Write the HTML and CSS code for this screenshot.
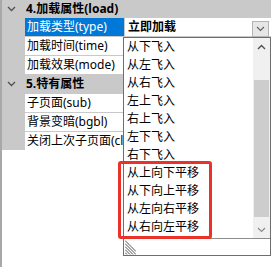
FILE: index.html
```html
<!DOCTYPE html>
<html lang="zh">
<head>
  <meta charset="utf-8">
  <link rel="stylesheet" href="styles.css">
</head>
<body>
<div class="page">

  <div class="grid">
    <div class="cat">
      <span class="toggle"><svg width="9" height="6" viewBox="0 0 9 6"><polyline points="1,1 4.5,4.5 8,1" fill="none" stroke="#505050" stroke-width="1.3"/></svg></span>
      <span>4.加载属性(load)</span>
    </div>
    <div class="row">
      <div class="name sel">加载类型(type)</div>
      <div class="val combo">
        <span class="combo-text">立即加载</span>
        <span class="drop-btn"><svg width="9" height="6" viewBox="0 0 9 6"><polyline points="1,1 4.5,4.5 8,1" fill="none" stroke="#606060" stroke-width="1.1"/></svg></span>
      </div>
    </div>
    <div class="row">
      <div class="name">加载时间(time)</div>
      <div class="val"></div>
    </div>
    <div class="row">
      <div class="name">加载效果(mode)</div>
      <div class="val"></div>
    </div>
    <div class="cat">
      <span class="toggle"><svg width="9" height="6" viewBox="0 0 9 6"><polyline points="1,1 4.5,4.5 8,1" fill="none" stroke="#505050" stroke-width="1.3"/></svg></span>
      <span>5.特有属性</span>
    </div>
    <div class="row">
      <div class="name">子页面(sub)</div>
      <div class="val"></div>
    </div>
    <div class="row">
      <div class="name">背景变暗(bgbl)</div>
      <div class="val"></div>
    </div>
    <div class="row">
      <div class="name">关闭上次子页面(close)</div>
      <div class="val"></div>
    </div>
  </div>

  <!-- dropdown popup of the type combo -->
  <div class="dropdown">
    <div class="list-body">
      <div class="items">
        <div class="item">从下飞入</div>
        <div class="item">从左飞入</div>
        <div class="item">从右飞入</div>
        <div class="item">左上飞入</div>
        <div class="item">右上飞入</div>
        <div class="item">左下飞入</div>
        <div class="item">右下飞入</div>
        <div class="item">从上向下平移</div>
        <div class="item">从下向上平移</div>
        <div class="item">从左向右平移</div>
        <div class="item">从右向左平移</div>
      </div>
      <div class="scrollbar">
        <div class="sb-btn"><svg width="9" height="6" viewBox="0 0 9 6"><polyline points="1,5 4.5,1.5 8,5" fill="none" stroke="#505050" stroke-width="1.4"/></svg></div>
        <div class="sb-track"><div class="sb-thumb"></div></div>
        <div class="sb-btn"><svg width="9" height="6" viewBox="0 0 9 6"><polyline points="1,1 4.5,4.5 8,1" fill="none" stroke="#8a8a8a" stroke-width="1.2"/></svg></div>
      </div>
    </div>
    <div class="grip-bar">
      <svg class="grip" width="11" height="15" viewBox="0 0 11 15">
        <g stroke="#505050" stroke-width="1">
          <line x1="0" y1="0.5" x2="11" y2="11.5"/>
          <line x1="0" y1="3.5" x2="11" y2="14.5"/>
          <line x1="0" y1="6.5" x2="8" y2="14.5"/>
          <line x1="0" y1="9.5" x2="5" y2="14.5"/>
          <line x1="0" y1="12.5" x2="2" y2="14.5"/>
        </g>
      </svg>
    </div>
  </div>

  <!-- annotation box -->
  <div class="mark"></div>

</div>
</body>
</html>
```

FILE: styles.css
```css
body {
  margin: 0;
  background: #fff;
  font-family: "Noto Sans", "Noto Sans CJK SC", sans-serif;
  font-size: 12px;
  color: #000;
  }

.page {
  position: relative;
  width: 271px;
  height: 267px;
  box-sizing: border-box;
  border-left: 2px solid #a8a8a8;
  overflow: hidden;
  }

.grid {
  display: flex;
  flex-direction: column;
  gap: 1px;
  background: #c9c9c9;
  }

.cat {
  display: flex;
  align-items: center;
  height: 18px;
  font-weight: bold;
  line-height: 18px;
  }

.cat:first-child {
  height: 17px;
  }

.toggle {
  display: flex;
  align-items: center;
  width: 24px;
  padding-left: 5px;
  box-sizing: border-box;
  }

.row {
  display: flex;
  height: 18px;
  margin-left: 23px;
  gap: 1px;
  line-height: 18px;
  }

.name {
  width: 99px;
  padding-left: 2px;
  box-sizing: border-box;
  background: #fff;
  white-space: nowrap;
  overflow: hidden;
  }

.name.sel {
  background: #0078d7;
  color: #fff;
  }

.val {
  flex: 1;
  background: #fff;
  }

.combo {
  display: flex;
  align-items: center;
  padding-left: 3px;
  }

.combo-text {
  font-weight: bold;
  }

.drop-btn {
  display: flex;
  align-items: center;
  justify-content: center;
  width: 15px;
  height: 14px;
  margin-left: auto;
  margin-right: 2px;
  margin-top: 3px;
  background: #e6e6e6;
  border: 1px solid #b4b4b4;
  }

.dropdown {
  position: absolute;
  left: 121px;
  top: 37px;
  width: 148px;
  box-sizing: border-box;
  border: 1px solid #6e6e6e;
  background: #fff;
  }

.list-body {
  display: flex;
  height: 200px;
  }

.items {
  flex: 1;
  line-height: 18px;
  padding-left: 3px;
  white-space: nowrap;
  overflow: hidden;
  }

.item {
  height: 18px;
  }

.scrollbar {
  display: flex;
  flex-direction: column;
  width: 17px;
  background: #f0f0f0;
  }

.sb-btn {
  display: flex;
  align-items: center;
  justify-content: center;
  height: 17px;
  }

.sb-track {
  flex: 1;
  padding: 25px 1px 0 1px;
  }

.sb-thumb {
  height: 137px;
  background: #cdcdcd;
  }

.grip-bar {
  height: 16px;
  border-top: 1px solid #8c8c8c;
  display: flex;
  align-items: flex-end;
  }

.grip {
  margin-left: 1px;
  }

.mark {
  position: absolute;
  left: 116px;
  top: 161px;
  width: 94px;
  height: 78px;
  box-sizing: border-box;
  border: 3px solid #e8322a;
  border-radius: 3px;
  }
```
